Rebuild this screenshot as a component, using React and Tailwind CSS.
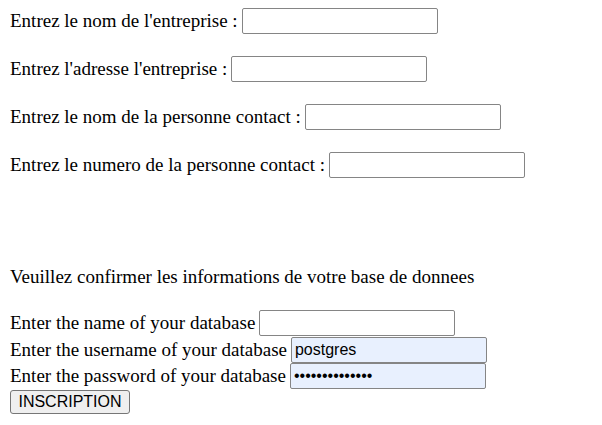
export default function App() {
  const field =
    "w-[196px] h-[26px] shrink-0 border border-[#858585] rounded-[2px] px-[3px] text-[16px] text-black font-['Liberation_Sans',Arial,sans-serif] outline-none";

  return (
    <div className="min-h-[425px] bg-white pl-[10px] pt-[8px] text-[19px] leading-[22px] text-black font-['Liberation_Serif','Times_New_Roman',serif]">
      {/* infos entreprise */}
      <div className="flex flex-col gap-[22px]">
        <div className="flex items-center h-[26px] gap-[4px]">
          <span>Entrez le nom de l'entreprise :</span>
          <input className={field} />
        </div>
        <div className="flex items-center h-[26px] gap-[4px]">
          <span>Entrez l'adresse l'entreprise :</span>
          <input className={field} />
        </div>
        <div className="flex items-center h-[26px] gap-[4px]">
          <span>Entrez le nom de la personne contact :</span>
          <input className={field} />
        </div>
        <div className="flex items-center h-[26px] gap-[4px]">
          <span>Entrez le numero de la personne contact :</span>
          <input className={field} />
        </div>
      </div>

      <p className="mt-[88px] h-[22px]">Veuillez confirmer les informations de votre base de donnees</p>

      {/* base de donnees */}
      <div className="mt-[22px] flex flex-col">
        <div className="flex items-center h-[26.5px] gap-[4px]">
          <span>Enter the name of your database</span>
          <input className={field} />
        </div>
        <div className="flex items-center h-[26.5px] gap-[4px]">
          <span>Enter the username of your database</span>
          <input className={field + " bg-[#e8f0fe]"} defaultValue="postgres" />
        </div>
        <div className="flex items-center h-[26.5px] gap-[4px]">
          <span>Enter the password of your database</span>
          <input type="password" className={field + " bg-[#e8f0fe]"} defaultValue="postgrespasswd" />
        </div>
        <div className="flex items-start h-[26px]">
          <button className="w-[120px] h-[24px] bg-[#efefef] border border-[#767676] rounded-[3px] text-[16px] text-black font-['Liberation_Sans',Arial,sans-serif]">
            INSCRIPTION
          </button>
        </div>
      </div>
    </div>
  );
}
